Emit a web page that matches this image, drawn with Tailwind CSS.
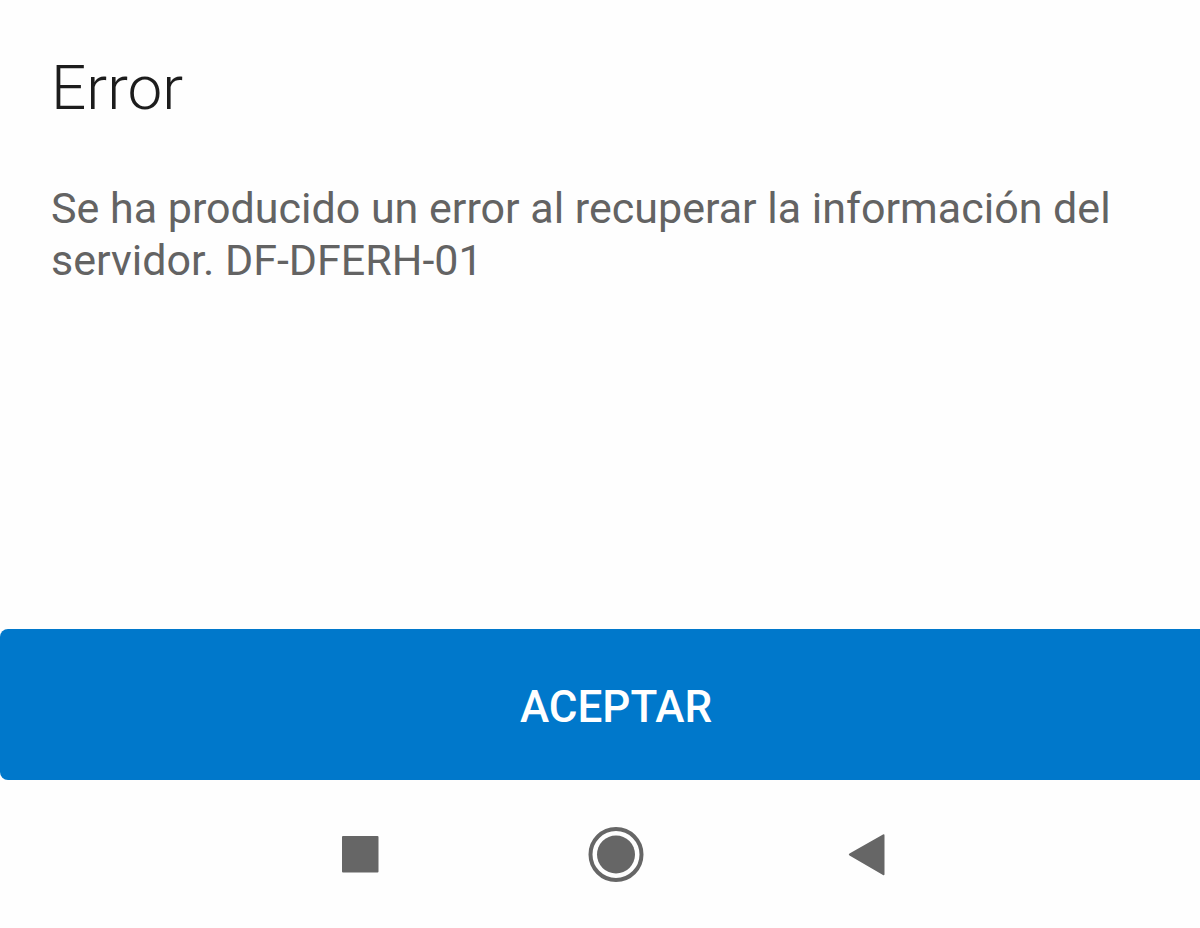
<!DOCTYPE html>
<html lang="es">
<head>
  <meta charset="UTF-8">
  <meta name="viewport" content="width=device-width, initial-scale=1.0">
  <title>Error</title>
  <script src="https://cdn.jsdelivr.net/npm/@tailwindcss/browser@4"></script>
</head>
<body class="min-h-screen flex flex-col bg-[#fefefe] font-['Roboto',sans-serif] overflow-x-hidden">
  <main class="flex-1 px-[51px] pt-[52px]">
    <h1 class="text-[62px] leading-[72px] font-light text-[#1c1c1c]">Error</h1>
    <p class="mt-[58px] text-[43px] leading-[52px] text-[#636363]">Se ha producido un error al recuperar la información del servidor. DF-DFERH-01</p>
  </main>

  <button type="button" class="h-[151px] w-full rounded-l-lg bg-[#0078cb] pt-1 pl-8 text-[44px] leading-[52px] font-medium text-white">ACEPTAR</button>

  <!-- System navigation -->
  <nav class="flex h-[148px] items-center justify-center gap-[200px] pl-8">
    <button type="button" aria-label="Recientes">
      <svg class="size-14" viewBox="0 0 56 56" fill="#666666"><rect x="10" y="10" width="36.500" height="36.500" rx="1"/></svg>
    </button>
    <button type="button" aria-label="Inicio">
      <svg class="size-14" viewBox="0 0 56 56"><circle cx="28" cy="28.500" r="25.500" fill="none" stroke="#666666" stroke-width="4"/><circle cx="28" cy="28.500" r="19" fill="#666666"/></svg>
    </button>
    <button type="button" aria-label="Atrás">
      <svg class="size-14" viewBox="0 0 56 56" fill="#666666"><path d="M5.500 27.500 39 8.500q1.500-1 1.500 1v38.500q0 2-1.500 1L5.500 29.500q-1.500-1 0-2z"/></svg>
    </button>
  </nav>
</body>
</html>
